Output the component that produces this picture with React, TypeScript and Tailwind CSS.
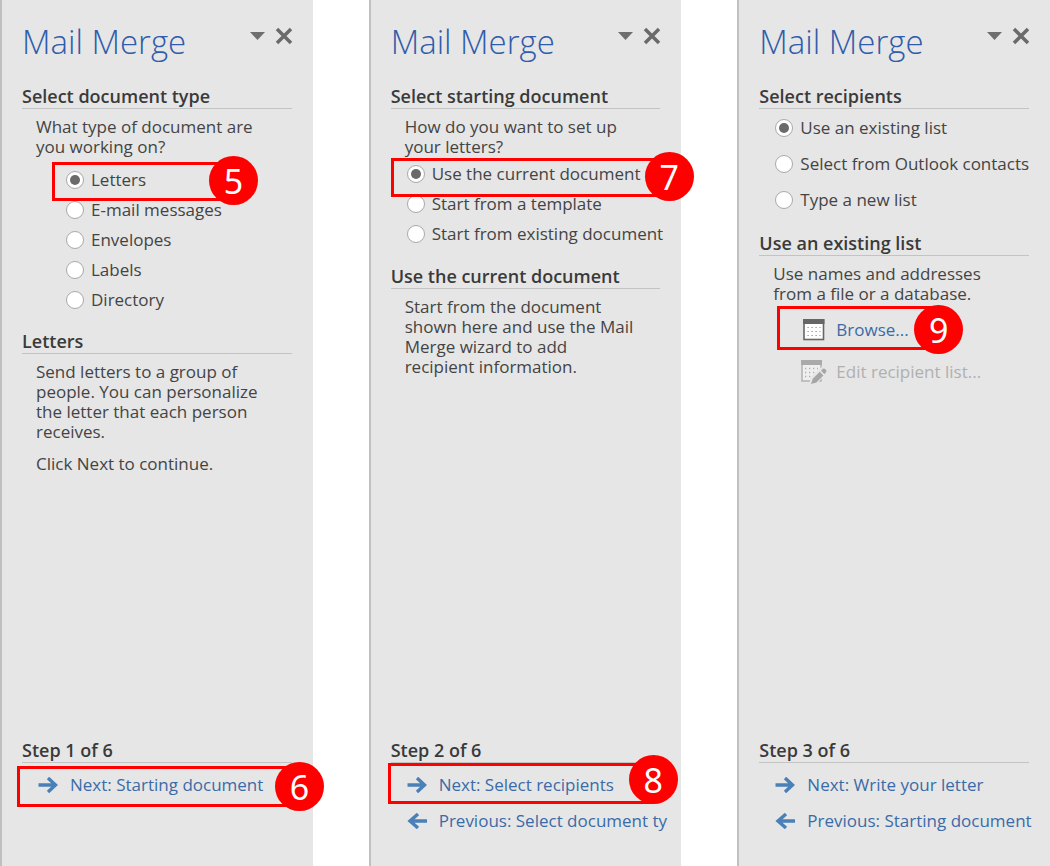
import type { ReactNode } from "react";

function Callout({ n, box, badge }: { n: number; box: string; badge: string }) {
  return (
    <span className={`pointer-events-none absolute z-10 border-3 border-[#ff0000] ${box}`}>
      <span
        className={`absolute -right-7 flex size-[49px] items-center justify-center rounded-full bg-[#ff0000] font-['Noto_Sans',sans-serif] text-[34px] leading-none text-white ${badge}`}
      >
        {n}
      </span>
    </span>
  );
}

function Heading({ children }: { children: ReactNode }) {
  return (
    <h2 className="mr-[21px] border-b border-[#c3c3c3] text-lg leading-6 font-semibold whitespace-nowrap text-[#3a3a3a]">
      {children}
    </h2>
  );
}

function Copy({ children, gap = "mt-2" }: { children: string; gap?: string }) {
  return <p className={`ml-3.5 max-w-58 leading-5 ${gap}`}>{children}</p>;
}

function Choice({
  name,
  label,
  row,
  checked,
  callout,
}: {
  name: string;
  label: string;
  row: string;
  checked?: boolean;
  callout?: ReactNode;
}) {
  return (
    <div className={`relative flex items-center ${row}`}>
      <label className="flex items-center gap-[7px] whitespace-nowrap">
        <input
          type="radio"
          name={name}
          defaultChecked={checked}
          className="grid size-[18px] shrink-0 appearance-none place-content-center rounded-full border border-[#a9a9a9] bg-white checked:before:size-[10px] checked:before:rounded-full checked:before:bg-[#6a6a6a] checked:before:content-['']"
        />
        {label}
      </label>
      {callout}
    </div>
  );
}

function Arrow({ back }: { back?: boolean }) {
  return (
    <svg viewBox="0 0 20 16" className="h-4 w-5 shrink-0" fill="none" stroke="#4a80b8" strokeWidth="3.4">
      {back ? <path d="M20 8H3M11 1L3 8l8 7" /> : <path d="M0.500 8h17M10 1L17.500 8L10 15" />}
    </svg>
  );
}

function StepLink({ label, back, callout }: { label: string; back?: boolean; callout?: ReactNode }) {
  return (
    <div className="relative flex h-9 items-center">
      <a href="#" className="ml-4 flex items-center gap-3 whitespace-nowrap text-[#3a6ba8]">
        <Arrow back={back} />
        {label}
      </a>
      {callout}
    </div>
  );
}

function TableIcon() {
  return (
    <svg viewBox="0 0 22 22" className="size-[22px] shrink-0">
      <rect x="1" y="1" width="19.500" height="19.500" fill="#fff" stroke="#666" strokeWidth="1.600" />
      <path d="M0 0h21.500v5H0z" fill="#666" />
      <path d="M4.500 8.500h13M4.500 12.500h13M4.500 16.500h13" stroke="#8a8a8a" strokeWidth="1.2" strokeDasharray="1.2 2.800" />
    </svg>
  );
}

function EditTableIcon() {
  return (
    <svg viewBox="0 0 26 24" className="h-6 w-[26px] shrink-0">
      <path d="M1 1h19v20H1z" fill="#efefef" stroke="#b2b2b2" strokeWidth="1.5" />
      <path d="M0 0h21v5H0z" fill="#aaa" />
      <path d="M4 8.500h13M4 12.500h11M4 16.500h7" stroke="#b0b0b0" strokeWidth="1.3" strokeDasharray="1.3 2.7" />
      <path d="M8 24l2-7L20.500 7l5.500 5-10 12z" fill="#e6e6e6" />
      <path d="M10 24l1.800-5.200 7-7 3.600 3.600-7 7zM20 10.700l1.900-1.900q1.100-.8 2.300.3l.8.8q1 1 .1 2L23.500 14.200z" fill="#a6a6a6" />
    </svg>
  );
}

function Pane({ step, children, links }: { step: number; children: ReactNode; links: ReactNode }) {
  return (
    <section className="flex min-h-screen min-w-0 flex-col border-l-2 border-[#c0c0c0] bg-[#e6e6e6] pl-5">
      <header className="flex h-21 items-start justify-between pt-[21px] pr-5">
        <h1 className="text-[33px] leading-[42px] font-light whitespace-nowrap text-[#2f5cab]">Mail Merge</h1>
        <div className="flex items-center gap-2.5 pt-1.5">
          <button type="button" aria-label="Pane options">
            <svg viewBox="0 0 15 8" className="h-2 w-[15px]">
              <path d="M0 0h15L7.500 8z" fill="#6e6e6e" />
            </svg>
          </button>
          <button type="button" aria-label="Close">
            <svg viewBox="0 0 18 18" className="size-[18px]">
              <path d="M2 2l14 14M16 2L2 16" stroke="#6a6a6a" strokeWidth="3.500" />
            </svg>
          </button>
        </div>
      </header>
      {children}
      <footer className="mt-auto pb-[27px]">
        <Heading>Step {step} of 6</Heading>
        <nav className="mt-1 min-h-18">{links}</nav>
      </footer>
    </section>
  );
}

export default function App() {
  return (
    <main className="grid min-h-screen grid-cols-3 gap-14 bg-white font-['Open_Sans','Noto_Sans',sans-serif] text-[17px] text-[#444]">
      <Pane
        step={1}
        links={
          <StepLink
            label="Next: Starting document"
            callout={<Callout n={6} box="-left-[5px] -top-px h-[41px] w-[282px]" badge="-top-[7px]" />}
          />
        }
      >
        <Heading>Select document type</Heading>
        <Copy>What type of document are you working on?</Copy>
        <div className="mt-2 ml-11">
          <Choice
            name="type"
            label="Letters"
            row="h-[30px]"
            checked
            callout={<Callout n={5} box="-left-3.5 -top-[3px] h-[39px] w-[181px]" badge="-top-[9px]" />}
          />
          <Choice name="type" label="E-mail messages" row="h-[30px]" />
          <Choice name="type" label="Envelopes" row="h-[30px]" />
          <Choice name="type" label="Labels" row="h-[30px]" />
          <Choice name="type" label="Directory" row="h-[30px]" />
        </div>
        <div className="mt-3.5">
          <Heading>Letters</Heading>
          <Copy>
            Send letters to a group of people. You can personalize the letter that each person receives.
          </Copy>
          <Copy gap="mt-3">Click Next to continue.</Copy>
        </div>
      </Pane>

      <Pane
        step={2}
        links={
          <>
            <StepLink
              label="Next: Select recipients"
              callout={<Callout n={8} box="-left-[3px] -top-1 h-[41px] w-[265px]" badge="-top-[11px]" />}
            />
            <StepLink label="Previous: Select document ty" back />
          </>
        }
      >
        <Heading>Select starting document</Heading>
        <Copy>How do you want to set up your letters?</Copy>
        <div className="mt-0.5 ml-4">
          <Choice
            name="start"
            label="Use the current document"
            row="h-[30px]"
            checked
            callout={<Callout n={7} box="-left-4 -top-px h-[39px] w-[278px]" badge="-top-[9px]" />}
          />
          <Choice name="start" label="Start from a template" row="h-[30px]" />
          <Choice name="start" label="Start from existing document" row="h-[30px]" />
        </div>
        <div className="mt-[15px]">
          <Heading>Use the current document</Heading>
          <Copy>Start from the document shown here and use the Mail Merge wizard to add recipient information.</Copy>
        </div>
      </Pane>

      <Pane
        step={3}
        links={
          <>
            <StepLink label="Next: Write your letter" />
            <StepLink label="Previous: Starting document" back />
          </>
        }
      >
        <Heading>Select recipients</Heading>
        <div className="mt-px ml-4">
          <Choice name="list" label="Use an existing list" row="h-9" checked />
          <Choice name="list" label="Select from Outlook contacts" row="h-9" />
          <Choice name="list" label="Type a new list" row="h-9" />
        </div>
        <div className="mt-[13px]">
          <Heading>Use an existing list</Heading>
          <Copy>Use names and addresses from a file or a database.</Copy>
          <div className="mt-[5px] ml-11">
            <div className="relative flex h-[42px] items-center">
              <button type="button" className="flex items-center gap-[11px] whitespace-nowrap text-[#3a6ba8]">
                <TableIcon />
                Browse...
              </button>
              <Callout n={9} box="-left-[26px] -top-[3px] h-[44px] w-[161px]" badge="-top-1" />
            </div>
            <div className="flex h-[42px] items-center">
              <button type="button" disabled className="-ml-0.5 flex items-center gap-[9px] whitespace-nowrap text-[#b0b0b0]">
                <EditTableIcon />
                Edit recipient list...
              </button>
            </div>
          </div>
        </div>
      </Pane>
    </main>
  );
}
